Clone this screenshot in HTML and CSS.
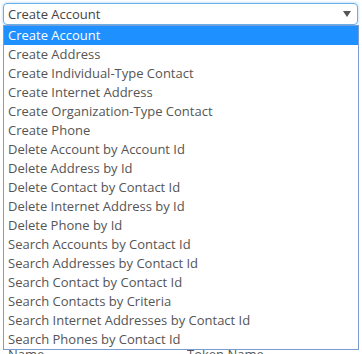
FILE: index.html
```html
<!DOCTYPE html>
<html>
<head>
<meta charset="utf-8">
<link rel="stylesheet" href="styles.css">
</head>
<body>
<div class="page">
  <div class="select">
    <span class="select-value">Create Account</span>
    <svg class="caret" width="8" height="6" viewBox="0 0 8 6"><path d="M0 0H8L4 6Z" fill="#555"/></svg>
  </div>
  <div class="fields">
    <div class="field-label">Name</div>
    <div class="field-label">Token Name</div>
  </div>
  <ul class="options">
    <li class="option selected">Create Account</li>
    <li class="option">Create Address</li>
    <li class="option">Create Individual-Type Contact</li>
    <li class="option">Create Internet Address</li>
    <li class="option">Create Organization-Type Contact</li>
    <li class="option">Create Phone</li>
    <li class="option">Delete Account by Account Id</li>
    <li class="option">Delete Address by Id</li>
    <li class="option">Delete Contact by Contact Id</li>
    <li class="option">Delete Internet Address by Id</li>
    <li class="option">Delete Phone by Id</li>
    <li class="option">Search Accounts by Contact Id</li>
    <li class="option">Search Addresses by Contact Id</li>
    <li class="option">Search Contact by Contact Id</li>
    <li class="option">Search Contacts by Criteria</li>
    <li class="option">Search Internet Addresses by Contact Id</li>
    <li class="option">Search Phones by Contact Id</li>
  </ul>
</div>
</body>
</html>
```

FILE: styles.css
```css
html, body {
  margin: 0;
  padding: 0;
  background: #fff;
}
body {
  font-family: "Open Sans", "Liberation Sans", sans-serif;
  font-size: 13px;
  color: #555;
  width: 362px;
  height: 354px;
  overflow: hidden;
}
.page {
  position: relative;
  padding: 3px 4px 0 3px;
}
.select {
  box-sizing: border-box;
  height: 22px;
  border: 1px solid #66afe9;
  border-radius: 4px;
  box-shadow: 0 0 3px rgba(102, 175, 233, 0.6);
  display: flex;
  align-items: center;
  justify-content: space-between;
  padding: 0 6px 0 4px;
  color: #444;
}
.caret {
  display: block;
}
.fields {
  display: grid;
  grid-template-columns: 179px 1fr;
  padding: 320px 0 0 5px;
  line-height: 18px;
  color: #555;
}
.options {
  position: absolute;
  top: 25px;
  left: 3px;
  width: 356px;
  box-sizing: border-box;
  margin: 0;
  padding: 0;
  list-style: none;
  border: 1px solid #7a9cd3;
  background: #fff;
}
.option {
  padding: 0 0 0 4px;
  line-height: 19px;
  height: 19px;
  color: #555;
  white-space: nowrap;
}
.option.selected {
  background: #1e90ff;
  color: #fff;
}
```
